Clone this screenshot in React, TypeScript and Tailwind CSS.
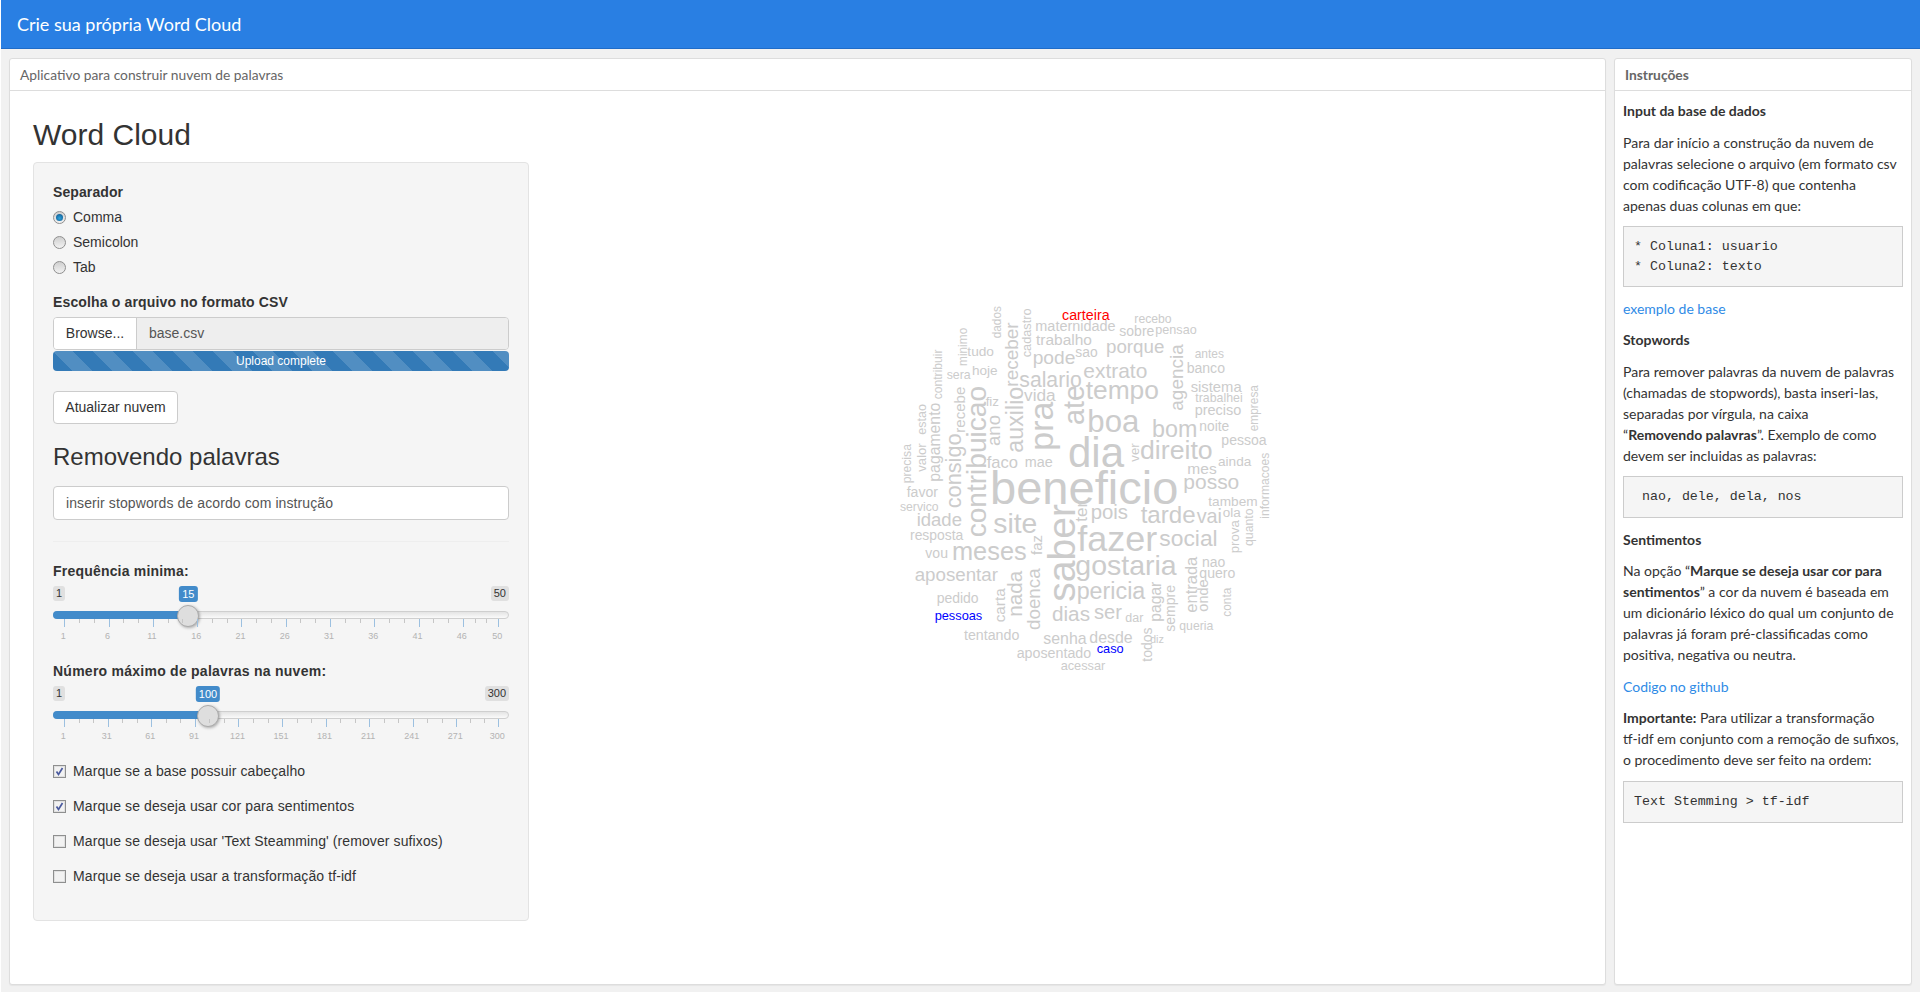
const charW: Record<string, number> = {
  a: 0.556, b: 0.556, c: 0.5, d: 0.556, e: 0.556, f: 0.278, g: 0.556, h: 0.556, i: 0.222, j: 0.222, k: 0.5, l: 0.222, m: 0.833,
  n: 0.556, o: 0.556, p: 0.556, q: 0.556, r: 0.333, s: 0.5, t: 0.278, u: 0.556, v: 0.5, w: 0.722, x: 0.5, y: 0.5, z: 0.5,
}
const emWidth = (w: string) => w.split("").reduce((sum, c) => sum + charW[c], 0)

// word, x, y (left end of the baseline), drawn length. coordinates are in a 1200 box (3x the 400px plot)
const flat: [string, number, number, number, string?][] = [
  ["carteira", 546, 90, 143, "#ff0000"],
  ["maternidade", 466, 123, 241],
  ["recebo", 763, 100, 112],
  ["sobre", 718, 138, 105],
  ["pensao", 826, 132, 124],
  ["trabalho", 468, 165, 168],
  ["porque", 678, 188, 175],
  ["sao", 586, 202, 67],
  ["pode", 458, 222, 128],
  ["antes", 944, 204, 88],
  ["banco", 920, 250, 115],
  ["extrato", 610, 265, 192],
  ["salario", 418, 290, 187],
  ["hoje", 276, 256, 77],
  ["tudo", 262, 198, 80],
  ["sera", 200, 266, 72],
  ["sistema", 932, 306, 153],
  ["trabalhei", 946, 336, 142],
  ["vida", 432, 332, 95],
  ["tempo", 617, 328, 220],
  ["fiz", 317, 348, 40],
  ["preciso", 944, 375, 140],
  ["boa", 622, 425, 156],
  ["bom", 816, 441, 136],
  ["noite", 958, 423, 90],
  ["pessoa", 1024, 465, 136],
  ["dia", 564, 530, 168],
  ["direito", 780, 508, 218],
  ["faco", 320, 533, 94],
  ["mae", 434, 530, 84],
  ["ainda", 1014, 527, 100],
  ["mes", 922, 552, 88],
  ["beneficio", 330, 642, 565],
  ["posso", 910, 596, 168],
  ["favor", 80, 622, 94],
  ["tambem", 985, 647, 148],
  ["servico", 60, 664, 116],
  ["pois", 632, 688, 112],
  ["tarde", 782, 700, 165],
  ["vai", 950, 700, 76],
  ["ola", 1028, 682, 54],
  ["site", 340, 730, 132],
  ["idade", 110, 708, 136],
  ["resposta", 90, 750, 160],
  ["fazer", 592, 784, 240],
  ["social", 838, 768, 175],
  ["vou", 136, 804, 68],
  ["meses", 216, 810, 224],
  ["gostaria", 586, 856, 304],
  ["nao", 966, 832, 70],
  ["quero", 958, 864, 108],
  ["aposentar", 104, 873, 250],
  ["pericia", 590, 928, 206],
  ["pedido", 170, 938, 126],
  ["pessoas", 164, 990, 143, "#0000ff"],
  ["dias", 516, 993, 114],
  ["ser", 642, 988, 84],
  ["dar", 736, 996, 54],
  ["queria", 898, 1020, 102],
  ["tentando", 252, 1050, 166],
  ["senha", 490, 1062, 130],
  ["desde", 628, 1058, 130],
  ["diz", 810, 1060, 42],
  ["caso", 650, 1090, 81, "#0000ff"],
  ["aposentado", 410, 1104, 224],
  ["acessar", 542, 1140, 134],
]

// rotated words read bottom to top: x is the baseline, y the lower end
const upright: [string, number, number, number][] = [
  ["dados", 362, 145, 97],
  ["cadastro", 452, 202, 147],
  ["receber", 415, 290, 193],
  ["minimo", 260, 228, 115],
  ["contribuir", 186, 328, 150],
  ["agencia", 908, 362, 199],
  ["empresa", 1134, 424, 139],
  ["recebe", 256, 428, 138],
  ["contribuicao", 318, 742, 454],
  ["ano", 360, 468, 93],
  ["auxilio", 430, 488, 198],
  ["pra", 520, 482, 147],
  ["ate", 612, 405, 120],
  ["estao", 138, 434, 92],
  ["valor", 138, 545, 85],
  ["pagamento", 180, 575, 237],
  ["precisa", 92, 580, 118],
  ["consigo", 243, 655, 225],
  ["ver", 778, 515, 55],
  ["ter", 622, 695, 60],
  ["informacoes", 1168, 686, 198],
  ["prova", 1078, 790, 100],
  ["quanto", 1118, 768, 113],
  ["faz", 487, 795, 60],
  ["saber", 585, 935, 293],
  ["nada", 425, 980, 138],
  ["doenca", 480, 1020, 185],
  ["carta", 375, 997, 102],
  ["entrada", 952, 968, 168],
  ["onde", 985, 965, 97],
  ["pagar", 842, 995, 120],
  ["sempre", 884, 1025, 140],
  ["conta", 1052, 980, 87],
  ["todos", 815, 1115, 103],
]

function WordCloud() {
  return (
    <svg viewBox="0 0 1200 1200" className="w-[400px] h-[400px] shrink-0 [font-family:'Liberation_Sans',Arial,sans-serif]">
      {flat.map(([word, x, y, len, color]) => (
        <text key={word} x={x} y={y} fontSize={len / emWidth(word)} fill={color ?? "#cccccc"}>{word}</text>
      ))}
      {upright.map(([word, x, y, len]) => (
        <text key={word} x={x} y={y} fontSize={len / emWidth(word)} fill="#cccccc" transform={`rotate(-90 ${x} ${y})`}>{word}</text>
      ))}
    </svg>
  )
}

function Radio({ label, checked }: { label: string; checked?: boolean }) {
  return (
    <div className="flex items-center h-5 mt-[5px] gap-[7px] text-[#333]">
      <span className="relative w-[13px] h-[13px] rounded-full border border-[#8f8f8f] bg-[linear-gradient(#cfcfcf,#f2f2f2)] flex items-center justify-center shrink-0">
        {checked && <span className="w-[7px] h-[7px] rounded-full bg-[radial-gradient(circle_at_50%_60%,#2ea3dc,#0b4f86)]" />}
      </span>
      <span>{label}</span>
    </div>
  )
}

function Check({ label, checked, first }: { label: string; checked?: boolean; first?: boolean }) {
  return (
    <div className={`flex items-center h-5 gap-[7px] text-[#333] tracking-[0.1px] ${first ? "mt-[11px]" : "mt-[15px]"}`}>
      <span className="w-[13px] h-[13px] border border-[#8e8f8f] bg-[#f2f2f2] shadow-[inset_0_0_0_1px_#e0e0e0] flex items-center justify-center shrink-0">
        {checked && (
          <svg viewBox="0 0 11 11" className="w-[11px] h-[11px]">
            <path d="M2.5 5.5 L4.5 8.5 L8.5 2" fill="none" stroke="#4a5a9e" strokeWidth="1.7" />
          </svg>
        )}
      </span>
      <span>{label}</span>
    </div>
  )
}

function Slider({ min, max, value, ticks }: { min: number; max: number; value: number; ticks: number[] }) {
  const pos = (v: number) => 11.3 + ((v - min) / (max - min)) * 434
  const minors: number[] = []
  ticks.slice(0, -1).forEach((t, i) => {
    const step = (pos(ticks[i + 1]) - pos(t)) / 3
    minors.push(pos(t) + step, pos(t) + step * 2)
  })
  return (
    <div className="relative h-16 mt-[5px]">
      <span className="absolute left-0 top-0 h-[15px] px-[3px] rounded-[3px] bg-[#e0e0e0] text-[11px] leading-[15px] text-[#333]">{min}</span>
      <span className="absolute right-0 top-0 h-[15px] px-[3px] rounded-[3px] bg-[#e0e0e0] text-[11px] leading-[15px] text-[#333]">{max}</span>
      <span
        className="absolute top-0 h-4 px-[3px] -translate-x-1/2 rounded-[3px] bg-[#428bca] text-[11px] leading-4 text-white"
        style={{ left: pos(value) }}
      >
        {value}
      </span>
      <div className="absolute left-0 right-0 top-[25px] h-2 rounded-full border border-[#cfcfcf] bg-[linear-gradient(#e4e4e4,#fafafa)]" />
      <div className="absolute left-0 top-[25px] h-2 rounded-l-full bg-[#428bca]" style={{ width: pos(value) }} />
      <div
        className="absolute top-[19px] w-[22px] h-[22px] -translate-x-1/2 rounded-full border border-[#ababab] bg-[#dedede] shadow-[1px_1px_3px_rgba(0,0,0,0.3)]"
        style={{ left: pos(value) }}
      />
      {minors.map((m) => (
        <span key={m} className="absolute top-[33px] w-px h-1 bg-[#c6c6c6]" style={{ left: m }} />
      ))}
      {ticks.map((t) => (
        <span key={t} className="absolute top-[33px] w-px h-2 bg-[#9cc0e0]" style={{ left: pos(t) }} />
      ))}
      {ticks.map((t) => (
        <span key={t} className="absolute top-[44px] -translate-x-1/2 text-[9px] leading-[12px] text-[#b3b3b3]" style={{ left: pos(t) - 1 }}>
          {t}
        </span>
      ))}
    </div>
  )
}

function Pre({ lines, className }: { lines: string[]; className: string }) {
  return (
    <pre className={`border border-[#cccccc] bg-[#f5f5f5] px-[10px] text-[13.3px] leading-5 text-[#333] [font-family:'Liberation_Mono','Courier_New',monospace] ${className}`}>
      {lines.join("\n")}
    </pre>
  )
}

export default function App() {
  return (
    <div className="min-h-screen h-[992px] overflow-hidden bg-white pl-px">
      <div className="h-full bg-[#f1f1f1] flex flex-col">
        <header className="h-[49px] shrink-0 bg-[#297fe3] border-b border-[#1f6cc8] pl-4 text-white text-[18px] leading-[48px] [font-family:Lato,sans-serif]">
          Crie sua própria Word Cloud
        </header>

        <div className="flex gap-2 pl-2 pt-[9px]">
          {/* main panel */}
          <section className="w-[1597px] h-[927px] bg-white border border-[#dddddd] rounded-[3px] shadow-[0_1px_1px_rgba(0,0,0,0.05)]">
            <div className="h-[32px] border-b border-[#dddddd] pl-[10px] text-[13.8px] leading-[31px] text-[#666] [font-family:Lato,sans-serif]">
              Aplicativo para construir nuvem de palavras
            </div>
            <div className="flex pl-[23px] text-[14px] [font-family:'Liberation_Sans',Arial,sans-serif]">
              <div className="w-[496px] shrink-0">
                <h2 className="mt-[27px] text-[30px] leading-[33px] text-[#333]">Word Cloud</h2>
                <div className="mt-[11px] h-[759px] bg-[#f5f5f5] border border-[#e3e3e3] rounded-[4px] pt-[19px] px-[19px]">
                  <div className="font-bold h-5 leading-5 tracking-[0.1px] text-[#333]">Separador</div>
                  <Radio label="Comma" checked />
                  <Radio label="Semicolon" />
                  <Radio label="Tab" />

                  <div className="font-bold h-5 leading-5 tracking-[0.15px] mt-[15px] text-[#333]">Escolha o arquivo no formato CSV</div>
                  <div className="flex h-[33px] mt-[5px] border border-[#cccccc] rounded-[4px] overflow-hidden">
                    <div className="w-[83px] bg-white border-r border-[#cccccc] flex items-center justify-center text-[#333]">Browse...</div>
                    <div className="flex-1 bg-[#eeeeee] pl-3 leading-[31px] text-[#555]">base.csv</div>
                  </div>
                  <div className="h-5 mt-px rounded-[4px] bg-[#337ab7] bg-[linear-gradient(45deg,rgba(255,255,255,0.15)_25%,transparent_25%,transparent_50%,rgba(255,255,255,0.15)_50%,rgba(255,255,255,0.15)_75%,transparent_75%,transparent)] bg-[length:40px_40px] text-center text-[12px] leading-5 text-white">
                    Upload complete
                  </div>

                  <button className="block h-[33px] w-[125px] mt-5 bg-white border border-[#cccccc] rounded-[4px] text-[#333]">Atualizar nuvem</button>

                  <h3 className="mt-5 text-[24px] leading-[26px] text-[#333]">Removendo palavras</h3>
                  <div className="h-[34px] mt-4 bg-white border border-[#cccccc] rounded-[4px] pl-3 leading-[32px] tracking-[0.1px] text-[#555]">
                    inserir stopwords de acordo com instrução
                  </div>
                  <hr className="mt-[21px] border-[#eeeeee]" />

                  <div className="font-bold h-5 leading-5 tracking-[0.2px] mt-[19px] text-[#333]">Frequência minima:</div>
                  <Slider min={1} max={50} value={15} ticks={[1, 6, 11, 16, 21, 26, 31, 36, 41, 46, 50]} />

                  <div className="font-bold h-5 leading-5 tracking-[0.25px] mt-[11px] text-[#333]">Número máximo de palavras na nuvem:</div>
                  <Slider min={1} max={300} value={100} ticks={[1, 31, 61, 91, 121, 151, 181, 211, 241, 271, 300]} />

                  <Check first checked label="Marque se a base possuir cabeçalho" />
                  <Check checked label="Marque se deseja usar cor para sentimentos" />
                  <Check label="Marque se deseja usar 'Text Steamming' (remover sufixos)" />
                  <Check label="Marque se deseja usar a transformação tf-idf" />
                </div>
              </div>
              <div className="pl-[351px] pt-[199px]">
                <WordCloud />
              </div>
            </div>
          </section>

          {/* instructions */}
          <aside className="w-[298px] h-[927px] bg-white border border-[#dddddd] rounded-[3px] shadow-[0_1px_1px_rgba(0,0,0,0.05)] text-[14px] leading-[21px] text-[#333] [font-family:Lato,sans-serif]">
            <div className="h-[32px] border-b border-[#dddddd] pl-[10px] text-[13.8px] font-bold leading-[31px] text-[#666]">Instruções</div>
            <div className="px-2 whitespace-nowrap">
              <h4 className="mt-[9px] font-bold">Input da base de dados</h4>
              <p className="mt-[11px]">
                Para dar início a construção da nuvem de<br />
                palavras selecione o arquivo (em formato csv<br />
                com codificação UTF-8) que contenha<br />
                apenas duas colunas em que:
              </p>
              <Pre className="mt-[10px] h-[61px] pt-[10px]" lines={["* Coluna1: usuario", "* Coluna2: texto"]} />
              <a className="block mt-[11px] text-[#2f8be6]">exemplo de base</a>
              <h4 className="mt-[10px] font-bold">Stopwords</h4>
              <p className="mt-[11px]">
                Para remover palavras da nuvem de palavras<br />
                (chamadas de stopwords), basta inseri-las,<br />
                separadas por vírgula, na caixa<br />
                “<b>Removendo palavras</b>”. Exemplo de como<br />
                devem ser incluidas as palavras:
              </p>
              <Pre className="mt-[10px] h-[42px] pt-[10px]" lines={[" nao, dele, dela, nos"]} />
              <h4 className="mt-[11px] font-bold">Sentimentos</h4>
              <p className="mt-[10px]">
                Na opção “<b>Marque se deseja usar cor para</b><br />
                <b>sentimentos</b>” a cor da nuvem é baseada em<br />
                um dicionário léxico do qual um conjunto de<br />
                palavras já foram pré-classificadas como<br />
                positiva, negativa ou neutra.
              </p>
              <a className="block mt-[11px] text-[#2f8be6]">Codigo no github</a>
              <p className="mt-[10px]">
                <b>Importante:</b> Para utilizar a transformação<br />
                tf-idf em conjunto com a remoção de sufixos,<br />
                o procedimento deve ser feito na ordem:
              </p>
              <Pre className="mt-[11px] h-[42px] pt-[10px]" lines={["Text Stemming > tf-idf"]} />
            </div>
          </aside>
        </div>
      </div>
    </div>
  )
}
